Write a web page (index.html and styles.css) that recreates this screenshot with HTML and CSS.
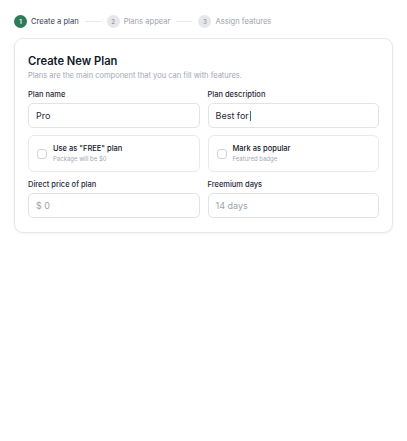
FILE: index.html
```html
<!DOCTYPE html>
<html lang="en">
<head>
  <meta charset="UTF-8" />
  <meta name="viewport" content="width=device-width, initial-scale=1.0" />
  <title>Create a plan</title>
  <link rel="stylesheet" href="styles.css">
</head>
<body>
  <div class="steps">
    <div class="step active"><span class="step-num">1</span>Create a plan</div>
    <span class="step-line"></span>
    <div class="step"><span class="step-num">2</span>Plans appear</div>
    <span class="step-line"></span>
    <div class="step"><span class="step-num">3</span>Assign features</div>
  </div>

  <div class="card">
    <h1>Create New Plan</h1>
    <p class="subtitle">Plans are the main component that you can fill with features.</p>

    <div class="form-grid">
      <div class="field">
        <label>Plan name</label>
        <div class="input">Pro</div>
      </div>
      <div class="field">
        <label>Plan description</label>
        <div class="input">Best for<span class="caret"></span></div>
      </div>

      <div class="option">
        <span class="checkbox"></span>
        <div>
          <div class="option-title">Use as "FREE" plan</div>
          <div class="option-sub">Package will be $0</div>
        </div>
      </div>
      <div class="option">
        <span class="checkbox"></span>
        <div>
          <div class="option-title">Mark as popular</div>
          <div class="option-sub">Featured badge</div>
        </div>
      </div>

      <div class="field">
        <label>Direct price of plan</label>
        <div class="input placeholder">$ 0</div>
      </div>
      <div class="field">
        <label>Freemium days</label>
        <div class="input placeholder">14 days</div>
      </div>
    </div>
  </div>
</body>
</html>
```

FILE: styles.css
```css
* {
  box-sizing: border-box;
  margin: 0;
  padding: 0;
}

body {
  font-family: Inter, 'Noto Sans', sans-serif;
  background: #ffffff;
  color: #111827;
  padding: 14px 14px;
  -webkit-font-smoothing: antialiased;
}

.steps {
  display: flex;
  align-items: center;
  gap: 6px;
  height: 14px;
  margin-bottom: 10px;
}

.step {
  display: flex;
  align-items: center;
  gap: 4px;
  font-size: 7.6px;
  color: #9ca3af;
}

.step.active {
  color: #374151;
}

.step-num {
  width: 13px;
  height: 13px;
  border-radius: 50%;
  background: #e5e7eb;
  color: #9ca3af;
  font-size: 6px;
  font-weight: 600;
  display: flex;
  align-items: center;
  justify-content: center;
}

.step.active .step-num {
  background: #2f7a57;
  color: #ffffff;
}

.step-line {
  width: 16px;
  height: 1px;
  background: #e5e7eb;
}

.card {
  border: 1px solid #e5e7eb;
  border-radius: 9px;
  box-shadow: 0 1px 3px rgba(0, 0, 0, 0.05);
  padding: 14px 13px 14px;
}

h1 {
  font-size: 11.2px;
  font-weight: 600;
  line-height: 16px;
  color: #111827;
  margin-bottom: 1px;
}

.subtitle {
  font-size: 7.5px;
  line-height: 12px;
  color: #a1a7b3;
  margin-bottom: 7px;
}

.form-grid {
  display: grid;
  grid-template-columns: 1fr 1fr;
  column-gap: 8px;
  row-gap: 7px;
}

.field {
  display: flex;
  flex-direction: column;
  gap: 2px;
}

label {
  font-size: 7.5px;
  font-weight: 500;
  line-height: 12px;
  color: #1f2937;
}

.input {
  height: 25px;
  border: 1px solid #e0e3e8;
  border-radius: 5px;
  padding: 0 7px;
  font-size: 9px;
  color: #1f2937;
  display: flex;
  align-items: center;
}

.input.placeholder {
  color: #9ca3af;
}

.caret {
  display: inline-block;
  width: 1px;
  height: 10px;
  background: #2f7a57;
  margin-left: 1px;
}

.option {
  height: 37px;
  border: 1px solid #e8eaee;
  border-radius: 6px;
  padding: 0 8px;
  display: flex;
  align-items: center;
  gap: 6px;
}

.checkbox {
  width: 10px;
  height: 10px;
  border: 1px solid #d1d5db;
  border-radius: 3px;
  flex-shrink: 0;
  margin-top: 1px;
}

.option-title {
  font-size: 7.5px;
  font-weight: 500;
  line-height: 11px;
  color: #111827;
}

.option-sub {
  font-size: 6px;
  line-height: 10px;
  color: #a1a7b3;
}
```
